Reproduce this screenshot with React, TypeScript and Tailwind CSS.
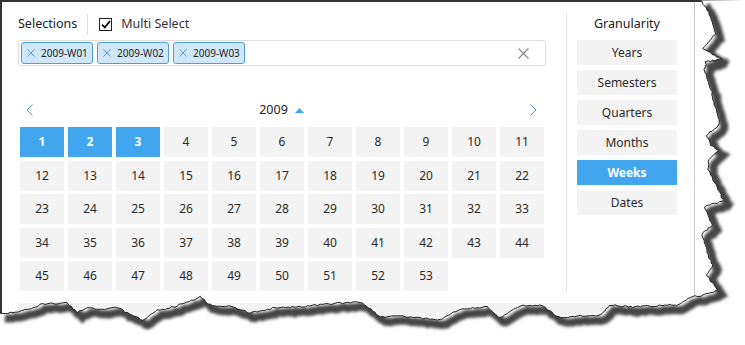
import React from 'react';

const FONT = { fontFamily: '"Noto Sans", "Open Sans", Arial, sans-serif' };

const rightEdge: [number, number][] = [
  [701, 0], [707, 10], [713, 22], [715, 35], [708, 42], [703, 48], [710, 53], [722, 59], [706, 62],
  [704, 70], [707, 80], [711, 90], [713, 100], [716, 110], [720, 120], [717, 128], [706, 135],
  [711, 145], [718, 150], [709, 160], [708, 170], [713, 180], [718, 190], [724, 200], [705, 207],
  [708, 215], [712, 225], [702, 235], [705, 245], [708, 255], [713, 265], [707, 275], [712, 283],
  [718, 290], [700, 296], [690, 297], [682, 303],
];

const bottomEdge: [number, number][] = [
  [677, 305], [650, 306], [633, 307], [610, 305], [600, 315], [580, 316], [560, 318], [545, 308],
  [540, 305], [520, 306], [500, 318], [487, 307], [470, 308], [460, 309], [440, 320], [420, 318],
  [400, 316], [380, 317], [365, 305], [360, 302], [340, 303], [318, 305], [300, 307], [273, 308],
  [250, 313], [233, 307], [210, 305], [200, 297], [187, 302], [167, 309], [157, 310], [143, 320],
  [127, 313], [117, 307], [100, 310], [87, 308], [77, 312], [67, 303], [43, 304], [33, 308],
  [13, 313], [0, 313],
];

function roughen(points: [number, number][]) {
  const out: [number, number][] = [];
  let seed = 11;
  const rnd = () => {
    seed = (seed * 9301 + 49297) % 233280;
    return seed / 233280 - 0.5;
  };
  for (let i = 0; i < points.length - 1; i++) {
    const [x1, y1] = points[i];
    const [x2, y2] = points[i + 1];
    const steps = Math.max(1, Math.round(Math.hypot(x2 - x1, y2 - y1) / 2.5));
    for (let s = 0; s < steps; s++) {
      const t = s / steps;
      out.push([x1 + (x2 - x1) * t + rnd() * 1.6, y1 + (y2 - y1) * t + rnd() * 1.6]);
    }
  }
  out.push(points[points.length - 1]);
  return out;
}

const edgePts = roughen([...rightEdge, ...bottomEdge]);
const edgePath = 'M' + edgePts.map(([x, y]) => `${x.toFixed(1)},${y.toFixed(1)}`).join(' L');
const outsidePath = edgePath + ' L0,345 L745,345 L745,0 Z';

const TornEdge: React.FC = () => (
  <svg className="absolute inset-0 pointer-events-none" width="745" height="345" viewBox="0 0 745 345">
    <defs>
      <clipPath id="outside">
        <path d={outsidePath} />
      </clipPath>
      <filter id="blur" x="-10%" y="-10%" width="120%" height="120%">
        <feGaussianBlur stdDeviation="1.6" />
      </filter>
    </defs>
    <path d={outsidePath} fill="#ffffff" />
    <g clipPath="url(#outside)">
      <path d={edgePath} transform="translate(5,5)" fill="none" stroke="#444444" strokeWidth="8" filter="url(#blur)" />
    </g>
    <path d={edgePath} fill="none" stroke="#1e1e1e" strokeWidth="1" />
  </svg>
);

const XIcon: React.FC<{ size: number; color: string }> = ({ size, color }) => (
  <svg width={size} height={size} viewBox="0 0 10 10" className="shrink-0">
    <path d="M0.5 0.5 L9.5 9.5 M9.5 0.5 L0.5 9.5" stroke={color} strokeWidth="1.1" fill="none" />
  </svg>
);

const Tag: React.FC<{ label: string }> = ({ label }) => (
  <div className="shrink-0 h-[22px] w-[72px] flex items-center gap-[6px] pl-[5px] rounded-[3px] border border-[#4b9fd9] bg-[#cfe7f8] text-[10px] text-[#222] whitespace-nowrap">
    <XIcon size={8} color="#3d8fd1" />
    <span>{label}</span>
  </div>
);

const granularities = ['Years', 'Semesters', 'Quarters', 'Months', 'Weeks', 'Dates'];
const weeks = Array.from({ length: 53 }, (_, i) => i + 1);
const selected = [1, 2, 3];

const App: React.FC = () => {
  return (
    <div className="relative w-[745px] h-[345px] bg-white overflow-hidden" style={FONT}>
      <div className="w-[745px] h-[345px] border-t-2 border-l-2 border-[#333333]">
        <div className="w-[693px] h-[343px] border-r border-[#c8c8d0] flex flex-col">
          <div className="flex">
            {/* left: selections + calendar */}
            <div className="w-[564px] pl-[16px] pr-[20px]">
              <div className="mt-[12px] h-[21px] flex items-center text-[12.5px] text-[#222]">
                <span>Selections</span>
                <div className="ml-[10px] w-px h-[21px] bg-[#dddddd]" />
                <div className="ml-[11px] w-[13px] h-[13px] border border-[#222] flex items-center justify-center">
                  <svg width="10" height="9" viewBox="0 0 10 9">
                    <path d="M1 4.6 L3.8 7.4 L9 1.2" stroke="#111" strokeWidth="1.8" fill="none" />
                  </svg>
                </div>
                <span className="ml-[9px] text-[#333]">Multi Select</span>
              </div>
              <div className="mt-[5px] h-[26px] border border-[#dedede] rounded-[3px] flex items-center pl-[2px] pr-[16px]">
                <div className="flex gap-[4px]">
                  <Tag label="2009-W01" />
                  <Tag label="2009-W02" />
                  <Tag label="2009-W03" />
                </div>
                <div className="ml-auto">
                  <XIcon size={11} color="#8a8a8a" />
                </div>
              </div>
              <div className="mx-[2px]">
                <div className="mt-[34px] h-[20px] flex items-center justify-between pl-[6px] pr-[7px]">
                  <svg width="7" height="12" viewBox="0 0 7 12">
                    <path d="M6.5 0.5 L1 6 L6.5 11.5" stroke="#4aa3e6" strokeWidth="1" fill="none" />
                  </svg>
                  <div className="flex items-center gap-[7px] text-[12.5px] text-[#222]">
                    <span>2009</span>
                    <svg width="9" height="5" viewBox="0 0 9 5">
                      <path d="M0 5 L4.5 0 L9 5 Z" fill="#41a6ee" />
                    </svg>
                  </div>
                  <svg width="7" height="12" viewBox="0 0 7 12">
                    <path d="M0.5 0.5 L6 6 L0.5 11.5" stroke="#4aa3e6" strokeWidth="1" fill="none" />
                  </svg>
                </div>
                <div className="mt-[7px] grid grid-cols-11 gap-x-[4px] gap-y-[3.5px]">
                  {weeks.map((w) => {
                    const on = selected.includes(w);
                    return (
                      <div
                        key={w}
                        className={`h-[30px] flex items-center justify-center text-[12px] ${
                          on ? 'bg-[#41a6ee] text-white font-bold' : 'bg-[#f3f3f3] text-[#2a2a2a]'
                        }`}
                      >
                        {w}
                      </div>
                    );
                  })}
                </div>
              </div>
            </div>
            {/* right: granularity */}
            <div className="mt-[11px] h-[279px] w-[128px] border-l border-[#e2e2e2] pl-[10px]">
              <div className="w-[100px] h-[22px] flex items-center justify-center text-[12.5px] text-[#222]">
                Granularity
              </div>
              <div className="mt-[5px] flex flex-col gap-[5px]">
                {granularities.map((g) => (
                  <div
                    key={g}
                    className={`w-[100px] h-[25px] flex items-center justify-center text-[12px] ${
                      g === 'Weeks' ? 'bg-[#41a6ee] text-white font-bold' : 'bg-[#f3f3f3] text-[#2a2a2a]'
                    }`}
                  >
                    {g}
                  </div>
                ))}
              </div>
            </div>
          </div>
          <div className="mt-[11px] ml-[16px] w-[655px] h-[20px] bg-[#f3f3f3]" />
        </div>
      </div>
      <TornEdge />
    </div>
  );
};

export default App;
